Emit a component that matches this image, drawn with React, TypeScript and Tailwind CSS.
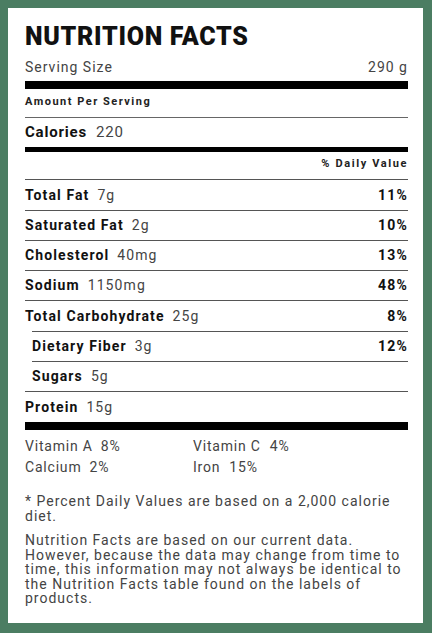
const rows = [
  { label: "Total Fat", amount: "7g", dv: "11%", h: "h-[31px]" },
  { label: "Saturated Fat", amount: "2g", dv: "10%", h: "h-[30px]" },
  { label: "Cholesterol", amount: "40mg", dv: "13%", h: "h-[30px]" },
  { label: "Sodium", amount: "1150mg", dv: "48%", h: "h-[30px]" },
  { label: "Total Carbohydrate", amount: "25g", dv: "8%", h: "h-[31px]" },
  { label: "Dietary Fiber", amount: "3g", dv: "12%", h: "h-[30px]", sub: true },
  { label: "Sugars", amount: "5g", dv: "", h: "h-[30px]", sub: true },
  { label: "Protein", amount: "15g", dv: "", h: "h-[31px]" },
];

export default function App() {
  return (
    <div className="w-[432px] h-[633px] bg-[#4b7d62] pt-[8px] pl-[8px] pr-[9px] pb-[10px] font-['Roboto',sans-serif]">
      <div className="h-full bg-white pt-[16px] pl-[17px] pr-[15px]">
        {/* Header */}
        <h1 className="text-[25px] leading-[25px] font-black text-[#111] tracking-[0.7px]">
          NUTRITION FACTS
        </h1>
        <div className="mt-[8px] flex justify-between text-[14px] leading-[20px] text-[#444] tracking-[1px]">
          <span>Serving Size</span>
          <span>290 g</span>
        </div>
        <div className="mt-[4px] h-[8px] bg-black" />

        <div className="pt-[5px] pb-[7px] text-[11px] leading-[16px] font-bold text-[#222] tracking-[1.5px] border-b border-[#666]">
          Amount Per Serving
        </div>
        <div className="pt-[4px] pb-[5px] text-[15px] leading-[20px] tracking-[0.8px]">
          <span className="font-bold text-[#111]">Calories</span>
          <span className="ml-[9px] text-[#444]">220</span>
        </div>
        <div className="h-[5px] bg-black" />
        <div className="pt-[4px] pb-[7px] text-right text-[11px] leading-[16px] font-bold text-[#222] tracking-[1.6px]">
          % Daily Value
        </div>

        {/* Nutrient rows */}
        {rows.map((r) => (
          <div
            key={r.label}
            className={`flex justify-between border-t border-[#555] ${r.h} items-center text-[14px] tracking-[1.1px] ${
              r.sub ? "ml-[7px]" : ""
            }`}
          >
            <span>
              <span className="font-bold text-[#111]">{r.label}</span>
              <span className="ml-[8px] text-[#444]">{r.amount}</span>
            </span>
            <span className="font-bold text-[#111] tracking-[1.2px]">{r.dv}</span>
          </div>
        ))}
        <div className="h-[8px] bg-black" />

        {/* Vitamins */}
        <div className="mt-[6px] grid grid-cols-[168px_1fr] text-[14px] leading-[21px] text-[#444] tracking-[0.8px]">
          <span>Vitamin A<span className="ml-[8px]">8%</span></span>
          <span>Vitamin C<span className="ml-[9px]">4%</span></span>
          <span>Calcium<span className="ml-[8px]">2%</span></span>
          <span>Iron<span className="ml-[9px]">15%</span></span>
        </div>

        {/* Footnotes */}
        <p className="mt-[16px] text-[14px] leading-[14.5px] text-[#444] tracking-[1px]">
          * Percent Daily Values are based on a 2,000 calorie diet.
        </p>
        <p className="mt-[10px] text-[14px] leading-[14.5px] text-[#444] tracking-[1px]">
          Nutrition Facts are based on our current data. However, because the
          data may change from time to time, this information may not always be
          identical to the Nutrition Facts table found on the labels of
          products.
        </p>
      </div>
    </div>
  );
}
